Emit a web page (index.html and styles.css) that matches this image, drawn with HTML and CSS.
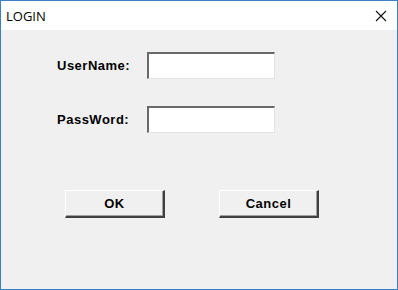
FILE: index.html
```html
<!DOCTYPE html>
<html>
<head>
<meta charset="utf-8">
<link rel="stylesheet" href="styles.css">
</head>
<body>
<div class="window">
  <div class="titlebar">
    <span class="title">LOGIN</span>
    <svg class="close" width="12" height="12" viewBox="0 0 12 12"><path d="M1 1 L11 11 M11 1 L1 11" stroke="#111" stroke-width="1.1" fill="none"/></svg>
  </div>
  <div class="content">
    <div class="form">
      <div class="row">
        <span class="label">UserName:</span>
        <div class="field"></div>
      </div>
      <div class="row">
        <span class="label">PassWord:</span>
        <div class="field"></div>
      </div>
    </div>
    <div class="buttons">
      <div class="btn">OK</div>
      <div class="btn">Cancel</div>
    </div>
  </div>
</div>
</body>
</html>
```
FILE: styles.css
```css
html, body { margin: 0; padding: 0; }
body { width: 398px; height: 290px; overflow: hidden; background: #f0f0f0; }
.window {
  box-sizing: border-box;
  width: 398px; height: 290px;
  border: 1px solid #3a81c3;
  display: flex; flex-direction: column;
  background: #f0f0f0;
}
.titlebar {
  height: 29px;
  background: #fff;
  display: flex; align-items: center; justify-content: space-between;
  padding: 0 10px 0 5px;
}
.title {
  font-family: "Open Sans", "Noto Sans", sans-serif;
  font-size: 13px; color: #000;
}
.content {
  flex: 1;
  padding: 22px 0 0 56px;
  font-family: "Liberation Sans", Arial, sans-serif;
}
.form { display: flex; flex-direction: column; gap: 27px; }
.row { display: flex; align-items: center; }
.label {
  width: 90px;
  font-size: 13px; font-weight: bold; color: #000;
  letter-spacing: 0.5px;
}
.field {
  box-sizing: border-box;
  width: 128px; height: 27px;
  background: #fff;
  border-top: 2px solid #696969;
  border-left: 2px solid #696969;
  border-right: 1px solid #e3e3e3;
  border-bottom: 1px solid #e3e3e3;
}
.buttons {
  display: flex; gap: 54px;
  margin-top: 57px; margin-left: 8px;
}
.btn {
  box-sizing: border-box;
  width: 100px; height: 28px;
  background: #f0f0f0;
  border-top: 1px solid #fff;
  border-left: 1px solid #fff;
  border-right: 2px solid #404040;
  border-bottom: 2px solid #404040;
  box-shadow: inset -1px -1px 0 #a0a0a0;
  display: flex; align-items: center; justify-content: center;
  font-size: 13px; font-weight: bold; color: #000;
  letter-spacing: 0.5px;
}
```
